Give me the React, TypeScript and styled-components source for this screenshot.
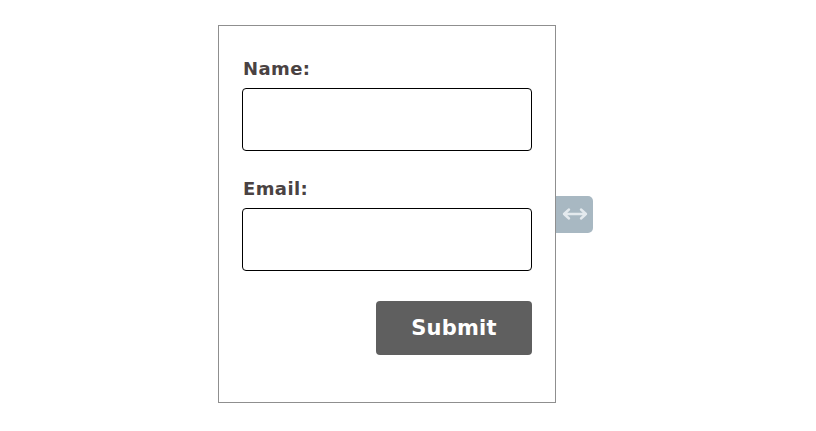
import styled, { createGlobalStyle } from "styled-components";

const GlobalStyle = createGlobalStyle`
  html, body {
    margin: 0;
    padding: 0;
    background: #ffffff;
    font-family: "DejaVu Sans", Verdana, sans-serif;
  }
`;

const fields = [
  { id: "name", label: "Name:", type: "text" },
  { id: "email", label: "Email:", type: "email" },
];

const App = () => {
  return (
    <>
      <GlobalStyle />
      <Page>
        <Frame>
          <FormBox>
            {fields.map((f) => (
              <Field key={f.id}>
                <Label htmlFor={f.id}>{f.label}</Label>
                <Input id={f.id} type={f.type} />
              </Field>
            ))}
            <Actions>
              <SubmitButton type="button">Submit</SubmitButton>
            </Actions>
          </FormBox>
          <ResizeHandle aria-label="Resize">
            <svg width="28" height="14" viewBox="0 0 28 14" fill="none">
              <path
                d="M3 7h22M8 2.5L3 7l5 4.5M20 2.5L25 7l-5 4.5"
                stroke="#e4eaee"
                strokeWidth="2.4"
                strokeLinecap="round"
                strokeLinejoin="round"
              />
            </svg>
          </ResizeHandle>
        </Frame>
      </Page>
    </>
  );
};

const Page = styled.div`
  padding: 25px 0 0 218px;
`;
const Frame = styled.div`
  display: flex;
  align-items: center;
`;
const FormBox = styled.form`
  width: 290px;
  padding: 32px 23px 47px;
  border: 1px solid #8f8f8f;
  display: flex;
  flex-direction: column;
  gap: 27px;
`;
const Field = styled.div`
  display: flex;
  flex-direction: column;
  gap: 9px;
`;
const Label = styled.label`
  font-size: 18px;
  line-height: 21px;
  font-weight: bold;
  color: #4a4242;
  letter-spacing: 0.4px;
  padding-left: 1px;
`;
const Input = styled.input`
  box-sizing: border-box;
  width: 290px;
  height: 63px;
  border: 1px solid #000000;
  border-radius: 4px;
  padding: 0 10px;
  font-size: 16px;
  outline: none;
`;
const Actions = styled.div`
  display: flex;
  justify-content: flex-end;
  margin-top: 3px;
`;
const SubmitButton = styled.button`
  width: 156px;
  height: 54px;
  border: none;
  border-radius: 4px;
  background: #5f5f5f;
  color: #ffffff;
  font-family: "DejaVu Sans", Verdana, sans-serif;
  font-size: 21px;
  font-weight: bold;
  letter-spacing: 0.2px;
  cursor: pointer;
`;
const ResizeHandle = styled.div`
  width: 37px;
  height: 37px;
  background: #a8b8c2;
  border-radius: 0 5px 5px 0;
  display: flex;
  align-items: center;
  justify-content: center;
`;

export default App;
